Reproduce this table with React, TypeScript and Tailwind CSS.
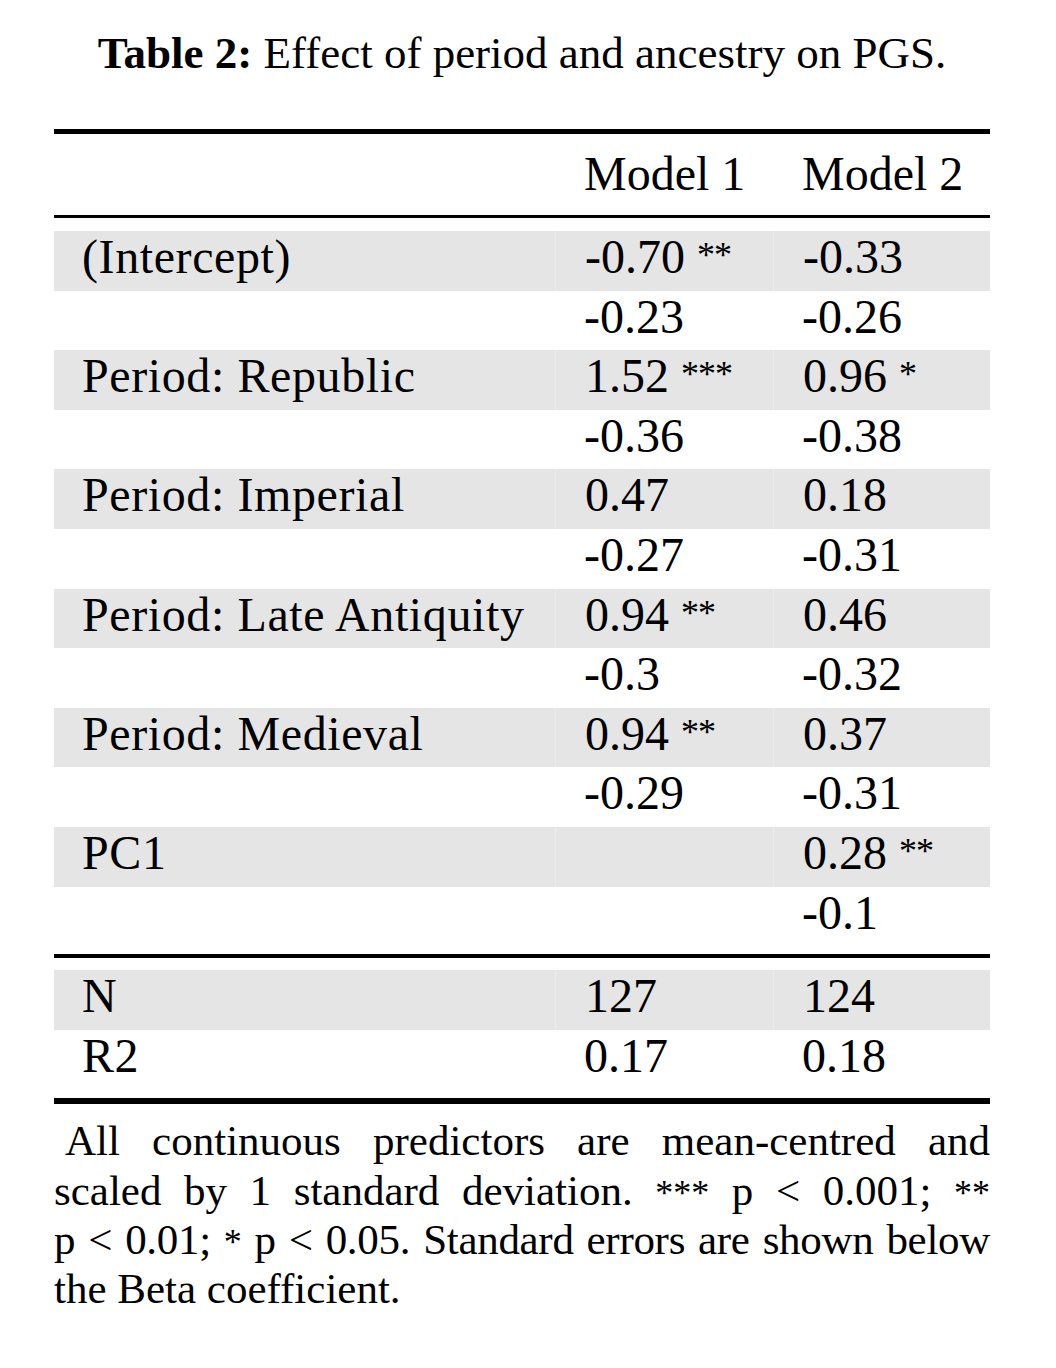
const rows: [string, string, string, string, string, boolean][] = [
  ["(Intercept)", "-0.70", "**", "-0.33", "", true],
  ["", "-0.23", "", "-0.26", "", false],
  ["Period: Republic", "1.52", "***", "0.96", "*", true],
  ["", "-0.36", "", "-0.38", "", false],
  ["Period: Imperial", "0.47", "", "0.18", "", true],
  ["", "-0.27", "", "-0.31", "", false],
  ["Period: Late Antiquity", "0.94", "**", "0.46", "", true],
  ["", "-0.3", "", "-0.32", "", false],
  ["Period: Medieval", "0.94", "**", "0.37", "", true],
  ["", "-0.29", "", "-0.31", "", false],
  ["PC1", "", "", "0.28", "**", true],
  ["", "", "", "-0.1", "", false],
];

const stats: [string, string, string, string, string, boolean][] = [
  ["N", "127", "", "124", "", true],
  ["R2", "0.17", "", "0.18", "", false],
];

function Stars({ s }: { s: string }) {
  if (!s) return null;
  return (
    <span className="relative -top-[6px] ml-[12px] text-[36px] leading-none tracking-[-1px]">{s}</span>
  );
}

function Row({ cells }: { cells: [string, string, string, string, string, boolean] }) {
  const [label, m1, s1, m2, s2, shaded] = cells;
  const bg = shaded ? "bg-[#e5e5e5]" : "bg-white";
  return (
    <div className="grid h-[59.6px] grid-cols-[501px_218px_217px] text-[48px] leading-[52px] whitespace-pre">
      <div className={`${bg} pl-[28px] tracking-[0.6px]`}>{label}</div>
      <div className={`${bg} pl-[29px] ${shaded ? "border-l border-[#ececec]" : ""}`}>
        {m1}
        <Stars s={s1} />
      </div>
      <div className={`${bg} pl-[29px] ${shaded ? "border-l border-[#ececec]" : ""}`}>
        {m2}
        <Stars s={s2} />
      </div>
    </div>
  );
}

export default function App() {
  return (
    <div className="min-h-[1368px] w-[1056px] bg-white text-black [font-family:'Liberation_Serif',serif]">
      <div className="ml-[54px] w-[936px]">
        <div className="pt-[31px] text-center text-[45px] leading-[44px]">
          <span className="font-bold">Table 2:</span> Effect of period and ancestry on PGS.
        </div>

        <div className="mt-[54px] h-[5px] bg-black" />
        <div className="grid grid-cols-[501px_218px_217px] pt-[14px] pb-[15px] text-[48px] leading-[52px]">
          <div />
          <div className="pl-[29px]">Model 1</div>
          <div className="pl-[29px]">Model 2</div>
        </div>
        <div className="h-[3px] bg-black" />

        <div className="pt-[13px] pb-[8px]">
          {rows.map((r, i) => (
            <Row key={i} cells={r} />
          ))}
        </div>
        <div className="h-[4px] bg-black" />
        <div className="pt-[12px] pb-[9px]">
          {stats.map((r, i) => (
            <Row key={i} cells={r} />
          ))}
        </div>
        <div className="h-[6px] bg-black" />

        <div className="mt-[12px] text-[43px] leading-[49.3px] whitespace-nowrap">
          <div className="pl-[11px] text-justify [text-align-last:justify]">
            All continuous predictors are mean-centred and
          </div>
          <div className="text-justify [text-align-last:justify]">
            scaled by 1 standard deviation. <span className="text-[36px] leading-none">***</span> p &lt; 0.001;{" "}
            <span className="text-[36px] leading-none">**</span>
          </div>
          <div className="text-justify tracking-[-0.3px] [text-align-last:justify]">
            p &lt; 0.01; <span className="text-[36px] leading-none">*</span> p &lt; 0.05. Standard errors are shown below
          </div>
          <div>the Beta coefficient.</div>
        </div>
      </div>
    </div>
  );
}
